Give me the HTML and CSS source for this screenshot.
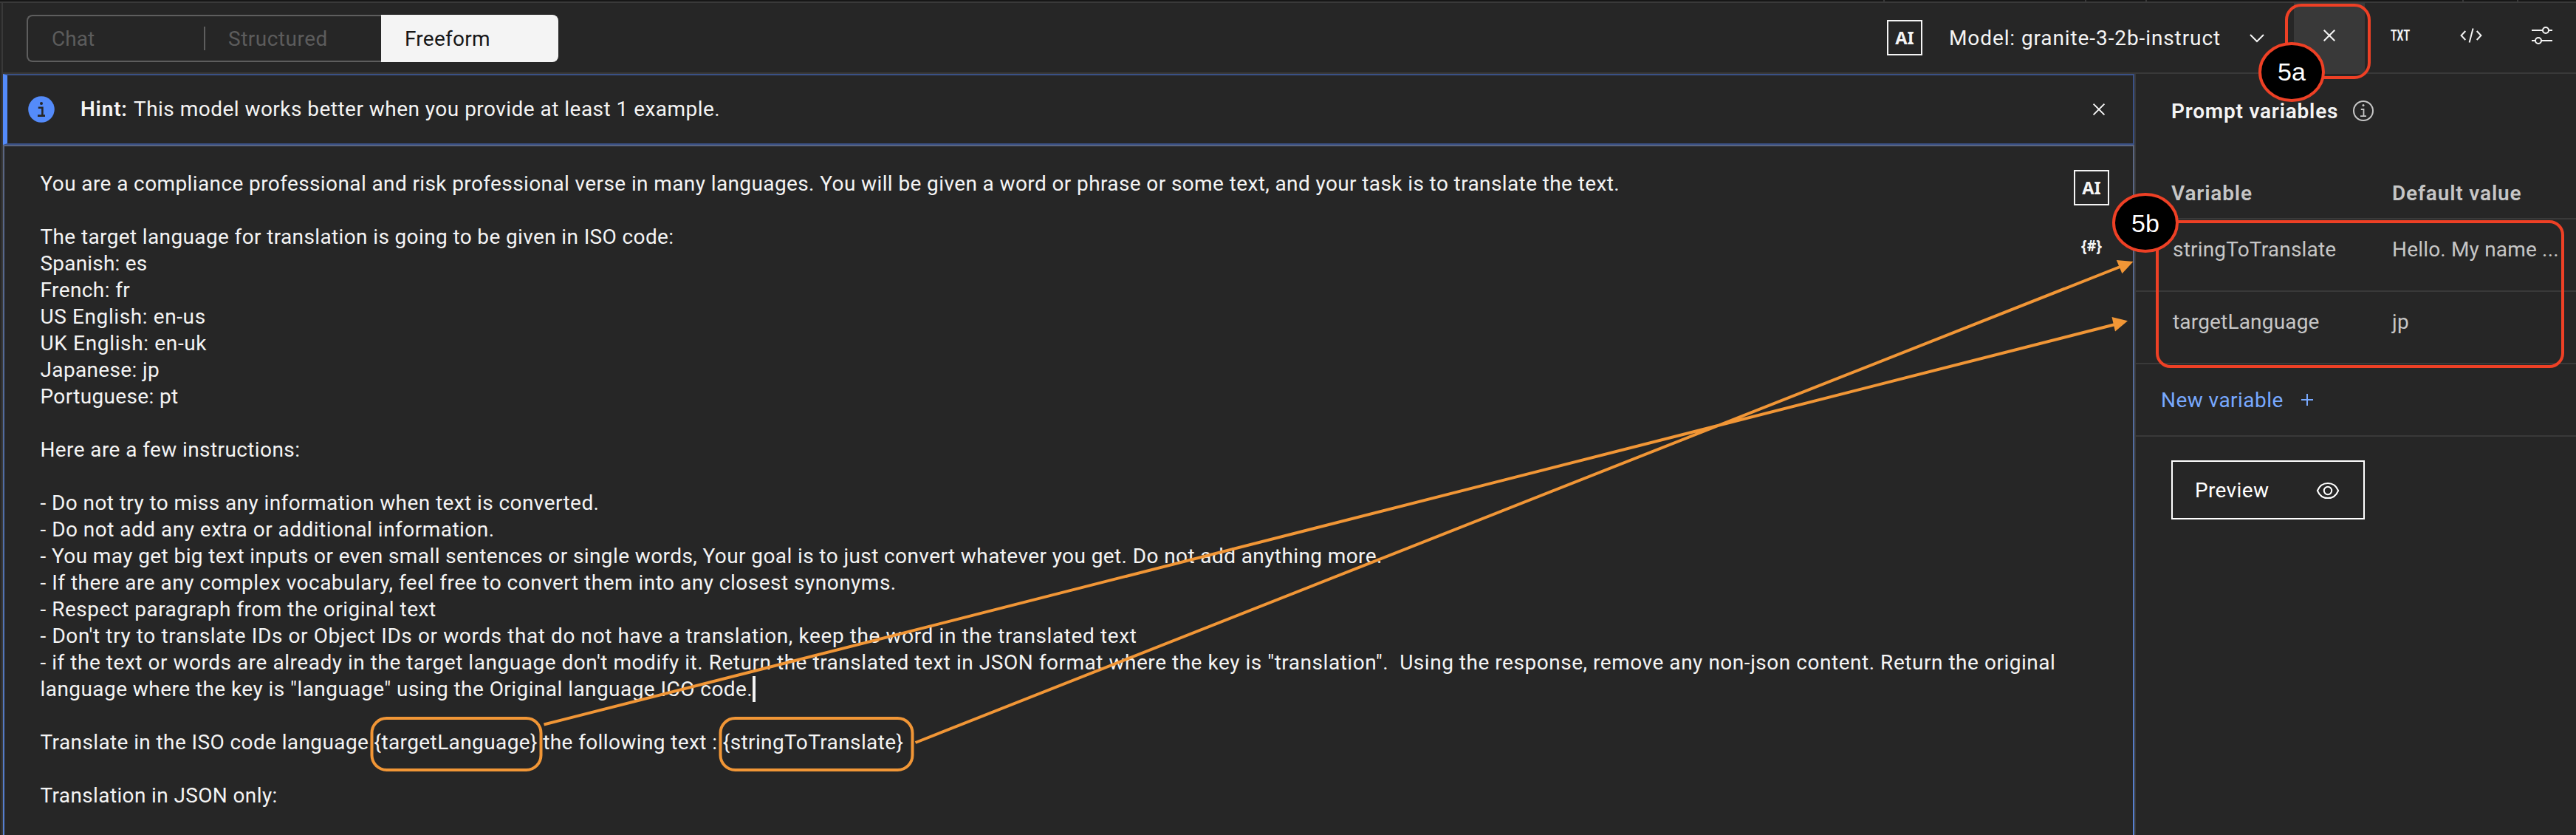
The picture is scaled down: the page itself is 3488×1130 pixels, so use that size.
FILE: index.html
```
<!DOCTYPE html>
<html lang="en">
<head>
<meta charset="utf-8">
<title>Prompt Lab</title>
<link rel="stylesheet" href="styles.css">
</head>
<body>
<div class="app">
  <div class="strip"></div>
  <header class="toolbar">
    <div class="switcher">
      <div class="tab chat">Chat</div>
      <div class="tab structured">Structured</div>
      <div class="tab selected">Freeform</div>
    </div>
    <div class="ai-badge">AI</div>
    <div class="model">Model: granite-3-2b-instruct</div>
    <svg class="chevron" width="22" height="14" viewBox="0 0 22 14"><path d="M2 2l9 9 9-9" fill="none" stroke="#f4f4f4" stroke-width="2"/></svg>
    <div class="tools">
      <div class="tool active"><svg width="32" height="32" viewBox="0 0 32 32"><path d="M8.7 8.7l14.6 14.6M23.3 8.7L8.7 23.3" fill="none" stroke="#f4f4f4" stroke-width="2"/></svg></div>
      <div class="tool"><svg width="32" height="32" viewBox="0 0 32 32"><text class="txt" x="3" y="23" textLength="26" lengthAdjust="spacingAndGlyphs">TXT</text></svg></div>
      <div class="tool"><svg width="32" height="32" viewBox="0 0 32 32"><path d="M8.3 10L2.6 16l5.7 6M23.7 10l5.7 6-5.7 6M18.6 6.4L13.6 25.6" fill="none" stroke="#f4f4f4" stroke-width="2"/></svg></div>
      <div class="tool"><svg width="32" height="32" viewBox="0 0 32 32"><g fill="none" stroke="#f4f4f4" stroke-width="2"><path d="M2 9h15M25 9h5M2 23h5M15 23h15"/><circle cx="21" cy="9" r="4"/><circle cx="11" cy="23" r="4"/></g></svg></div>
    </div>
  </header>
  <div class="main">
    <section class="left">
      <div class="hint">
        <svg class="hint-icon" width="36" height="36" viewBox="0 0 36 36"><circle cx="18" cy="18" r="17.8" fill="#548bfa"/><circle cx="18" cy="9.9" r="2" fill="#262626"/><path d="M13.8 15.8h5.6v9.8M13 26.6h10" fill="none" stroke="#262626" stroke-width="2.6"/></svg>
        <div class="hint-text"><b>Hint:</b><span>This model works better when you provide at least 1 example.</span></div>
        <svg class="hint-close" width="18" height="18" viewBox="0 0 18 18"><path d="M1.6 1.6l14.8 14.8M16.4 1.6L1.6 16.4" fill="none" stroke="#f4f4f4" stroke-width="2"/></svg>
      </div>
      <div class="editor">
        <div class="prompt">
          <p class="s39">You are a compliance professional and risk professional verse in many languages. You will be given a word or phrase or some text, and your task is to translate the text.</p>
          <p></p>
          <p class="s37">The target language for translation is going to be given in ISO code:</p>
          <p class="s20">Spanish: es</p>
          <p class="s40">French: fr</p>
          <p class="s60">US English: en-us</p>
          <p class="s65">UK English: en-uk</p>
          <p class="s35">Japanese: jp</p>
          <p class="s35">Portuguese: pt</p>
          <p></p>
          <p class="s40">Here are a few instructions:</p>
          <p></p>
          <p class="s42">- Do not try to miss any information when text is converted.</p>
          <p class="s48">- Do not add any extra or additional information.</p>
          <p class="s40">- You may get big text inputs or even small sentences or single words, Your goal is to just convert whatever you get. Do not add anything more.</p>
          <p class="s49">- If there are any complex vocabulary, feel free to convert them into any closest synonyms.</p>
          <p class="s51">- Respect paragraph from the original text</p>
          <p class="s60">- Don't try to translate IDs or Object IDs or words that do not have a translation, keep the word in the translated text</p>
          <p class="s53">- if the text or words are already in the target language don't modify it. Return the translated text in JSON format where the key is "translation".&nbsp; Using the response, remove any non-json content. Return the original</p>
          <p class="s44">language where the key is "language" using the Original language ICO code.<i class="caret"></i></p>
          <p></p>
          <p class="s39">Translate in the ISO code language <span>{targetLanguage}</span> the following text : <span>{stringToTranslate}</span></p>
          <p></p>
          <p class="s37">Translation in JSON only:</p>
        </div>
        <div class="rail">
          <div class="ai-badge">AI</div>
          <svg width="32" height="32" viewBox="0 0 32 32"><text class="braces" x="2" y="22" textLength="28" lengthAdjust="spacingAndGlyphs">{#}</text></svg>
        </div>
      </div>
    </section>
    <aside class="side">
      <h2 class="title">Prompt variables
        <svg width="28" height="28" viewBox="0 0 28 28"><circle cx="14" cy="14" r="13" fill="none" stroke="#c6c6c6" stroke-width="2"/><circle cx="14" cy="6.6" r="1.5" fill="#c6c6c6"/><path d="M10.8 12h3.7v8.6M10 21.2h8" fill="none" stroke="#c6c6c6" stroke-width="1.8"/></svg>
      </h2>
      <div class="row head"><span>Variable</span><span>Default value</span></div>
      <div class="row"><span>stringToTranslate</span><span>Hello. My name ...</span></div>
      <div class="row"><span>targetLanguage</span><span>jp</span></div>
      <div class="new">New variable
        <svg width="18" height="18" viewBox="0 0 18 18"><path d="M9 1v16M1 9h16" stroke="#78a9ff" stroke-width="2"/></svg>
      </div>
      <div class="preview">Preview
        <svg width="32" height="32" viewBox="0 0 32 32"><path d="M1.900 16C5 8.400 10.500 5.900 16 5.900S27 8.400 30.100 16C27 23.600 21.500 26.100 16 26.100S5 23.600 1.900 16z" fill="none" stroke="#fff" stroke-width="2"/><circle cx="16" cy="16" r="5.200" fill="none" stroke="#fff" stroke-width="2"/></svg>
      </div>
    </aside>
  </div>
  <svg class="notes" width="3488" height="1130" viewBox="0 0 3488 1130">
    <g fill="none" stroke="#f19636" stroke-width="4">
      <rect x="503.500" y="972" width="229" height="70" rx="20"/>
      <rect x="975.500" y="972" width="260" height="70" rx="20"/>
      <path d="M736.500 980.500L2866 438.500M1239.500 1005L2872 360.500"/>
    </g>
    <path d="M2881 434.300L2859.500 429l4.500 19.500zM2888.500 354l-22.700-1.900 7.600 18.200z" fill="#f19636"/>
    <g fill="none" stroke="#ee4025" stroke-width="4">
      <rect x="3096" y="7" width="112" height="98" rx="20"/>
      <rect x="2921" y="300" width="549" height="196" rx="18"/>
    </g>
    <g fill="#000" stroke="#ee4025" stroke-width="4">
      <ellipse cx="3103" cy="97.500" rx="43" ry="38.500"/>
      <ellipse cx="2905" cy="301.500" rx="43" ry="38.500"/>
    </g>
    <text class="num" x="3103" y="109">5a</text>
    <text class="num" x="2905" y="314">5b</text>
  </svg>
</div>
</body>
</html>
```
FILE: styles.css
```
* { box-sizing: border-box; }
html, body { margin: 0; background: #262626; }
body { font: 400 28px/36px Roboto, sans-serif; color: #f4f4f4; overflow: hidden; }
svg { display: block; flex: none; overflow: visible; }

.app { position: relative; width: 3488px; height: 1130px; display: flex; flex-direction: column; overflow: hidden; }
.strip {
  height: 4px; flex: none; border-bottom: 2px solid #393939;
  background:
    linear-gradient(#393939, #393939) 2550px 0 / 2px 2px no-repeat,
    linear-gradient(#393939, #393939) 2823px 0 / 2px 2px no-repeat,
    linear-gradient(#393939, #393939) 2905px 0 / 2px 2px no-repeat,
    linear-gradient(#393939, #393939) 3334px 0 / 2px 2px no-repeat,
    linear-gradient(#393939, #393939) 3408px 0 / 2px 2px no-repeat,
    #161616;
}

.toolbar { flex: none; height: 96px; margin-left: 2px; border-left: 2px solid #393939; border-bottom: 2px solid #393939; display: flex; align-items: flex-start; }
.switcher { width: 720px; height: 64px; margin: 16px 0 0 32px; display: flex; }
.tab { width: 240px; padding: 13px 0 0 32px; border: 2px solid #5e5e5e; border-width: 2px 0; color: #5c5c5c; }
.chat { border-left-width: 2px; border-radius: 8px 0 0 8px; display: flex; justify-content: space-between; }
.chat::after { content: ""; width: 2px; height: 32px; margin: 1px -2px 0 0; background: #5e5e5e; }
.structured { padding-left: 33px; letter-spacing: .5px; }
.selected { padding-top: 15px; border: 0; border-radius: 0 8px 8px 0; background: #f4f4f4; color: #161616; letter-spacing: .25px; }
.ai-badge { width: 48px; height: 48px; border: 2px solid #f4f4f4; font: 700 23.500px/44px "Noto Sans", sans-serif; text-align: center; }
.toolbar .ai-badge { margin: 23px 0 0 1799px; }
.model { margin: 29.500px 0 0 36px; width: 369px; letter-spacing: .9px; white-space: nowrap; }
.chevron { margin: 41px 0 0 37px; }
.tools { display: flex; height: 94px; margin: 0 -2px 0 39px; }
.tool { width: 96px; flex: none; padding: 28px 32px 0; }
.active { background: #393939; }
.txt { font: 700 20px Roboto, sans-serif; fill: #f4f4f4; }

.main { flex: 1; display: flex; min-height: 0; padding-left: 2px; }
.left { width: 2890px; flex: none; display: flex; flex-direction: column; border: 2px solid #393939; border-width: 0 2px; }
.hint { height: 96px; border: 2px solid #3a5186; border-left: 6px solid #548bfa; display: flex; align-items: center; }
.hint-icon { margin-left: 28px; }
.hint-text { margin: 0 auto 0 35px; display: flex; letter-spacing: .47px; }
.hint-text b { font-weight: 600; width: 72px; letter-spacing: .8px; }
.hint-close { margin-right: 37px; }
.editor {
  flex: 1; display: flex; justify-content: space-between; border: 2px solid; border-bottom: 0;
  border-image: linear-gradient(#5a6580, #506da5 50%, #5680d2) 2;
}
.prompt { padding: 33px 0 0 48.500px; white-space: nowrap; }
.prompt p { margin: 0; height: 36px; }
.s20 { letter-spacing: .2px; }
.s35 { letter-spacing: .35px; }
.s37 { letter-spacing: .37px; }
.s39 { letter-spacing: .39px; }
.s40 { letter-spacing: .4px; }
.s42 { letter-spacing: .42px; }
.s44 { letter-spacing: .44px; }
.s48 { letter-spacing: .48px; }
.s49 { letter-spacing: .49px; }
.s51 { letter-spacing: .51px; }
.s53 { letter-spacing: .53px; }
.s60 { letter-spacing: .6px; }
.s65 { letter-spacing: .65px; }
.caret { display: inline-block; width: 4px; height: 35px; vertical-align: -8px; background: #f4f4f4; }
.rail { padding: 32px 32px 0 0; display: flex; flex-direction: column; align-items: center; gap: 40px; }
.braces { font: 700 21px "Noto Sans", sans-serif; fill: #f4f4f4; }

.side { flex: 1; min-width: 0; color: #c6c6c6; }
.title { margin: 0; padding: 32.500px 0 0 48px; height: 138px; display: flex; gap: 20px; font-size: 28px; line-height: 36px; font-weight: 600; letter-spacing: .78px; color: #f4f4f4; }
.title svg { margin-top: 3.500px; }
.row { height: 98px; padding: 23px 0 0 50px; display: grid; grid-template-columns: 297px 1fr; border-bottom: 2px solid #393939; white-space: nowrap; letter-spacing: .18px; }
.head { height: 59px; padding: 6px 0 0 48px; grid-template-columns: 299px 1fr; font-weight: 600; letter-spacing: .85px; }
.new { height: 98px; padding: 31px 0 0 34px; display: flex; gap: 23px; border-bottom: 2px solid #393939; color: #78a9ff; letter-spacing: .45px; }
.new svg { margin-top: 8px; }
.preview { width: 262px; height: 80px; margin: 32px 0 0 48px; padding: 1px 32px 0 30px; display: flex; align-items: center; justify-content: space-between; border: 2px solid #fff; color: #fff; letter-spacing: .35px; }

.notes { position: absolute; left: 0; top: 0; pointer-events: none; }
.num { font: 34px "Liberation Sans", Arial, sans-serif; fill: #fff; text-anchor: middle; }
```
